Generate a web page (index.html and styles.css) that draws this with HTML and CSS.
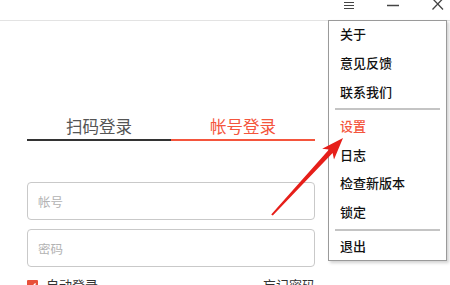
FILE: index.html
```html
<!DOCTYPE html>
<html lang="zh">
<head>
<meta charset="utf-8">
<link rel="stylesheet" href="styles.css">
</head>
<body>
<div class="window">
  <div class="titlebar">
    <svg class="ico ico-menu" width="12" height="12" viewBox="0 0 12 12"><path d="M1 2.5H11M1 5.5H11M1 8.5H11" stroke="#444" stroke-width="1.2"/></svg>
    <svg class="ico ico-min" width="14" height="12" viewBox="0 0 14 12"><path d="M1 5.5H13" stroke="#444" stroke-width="1.5"/></svg>
    <svg class="ico ico-close" width="13" height="12" viewBox="0 0 13 12"><path d="M1.5 -1.5L12 9.5M12 -1.5L1.5 9.5" stroke="#444" stroke-width="1.3"/></svg>
  </div>
  <div class="form">
    <div class="tabs">
      <div class="tab tab-dark">扫码登录</div>
      <div class="tab tab-active">帐号登录</div>
    </div>
    <div class="field"><span class="ph">帐号</span></div>
    <div class="field field-2"><span class="ph">密码</span></div>
    <div class="opts">
      <label class="auto"><span class="check"><svg width="11" height="11" viewBox="0 0 11 11"><path d="M2.5 5.5L4.6 7.6L8.6 3.4" stroke="#fff" stroke-width="1.4" fill="none"/></svg></span>自动登录</label>
      <span class="forgot">忘记密码</span>
    </div>
  </div>
  <div class="menu">
    <div class="item">关于</div>
    <div class="item">意见反馈</div>
    <div class="item">联系我们</div>
    <div class="sep"></div>
    <div class="item item-red">设置</div>
    <div class="item">日志</div>
    <div class="item">检查新版本</div>
    <div class="item">锁定</div>
    <div class="sep"></div>
    <div class="item">退出</div>
  </div>
  <svg class="arrow" width="450" height="285" viewBox="0 0 450 285"><polygon points="271.2,214.4 329,149.5 322.2,148.8 343,138 334,159.6 332.6,152.9 272.8,215.6" fill="#e61f1a"/></svg>
</div>
</body>
</html>
```
FILE: styles.css
```css
* { box-sizing: border-box; }
html, body { margin: 0; padding: 0; background: #fff; }
body {
  width: 450px;
  height: 285px;
  overflow: hidden;
  font-family: "Noto Sans CJK SC", "Noto Sans", sans-serif;
}
.window { position: relative; width: 450px; height: 285px; }
.titlebar {
  height: 21px;
  border-bottom: 1px solid #e3e3e3;
  display: flex;
  justify-content: flex-end;
  align-items: flex-start;
  gap: 31px;
  padding-right: 6px;
}
.ico { display: block; }
.form {
  width: 288px;
  margin-left: 27px;
}
.tabs {
  margin-top: 92px;
  display: flex;
}
.tab {
  flex: 1;
  height: 28px;
  line-height: 26px;
  text-align: center;
  font-size: 16.5px;
  color: #555;
  border-bottom: 2px solid #333;
}
.tab-active {
  color: #f4553d;
  border-bottom-color: #f4553d;
}
.field {
  margin-top: 41px;
  height: 38px;
  border: 1px solid #c9c9c9;
  border-radius: 4px;
  padding-left: 10px;
  display: flex;
  align-items: center;
}
.field-2 { margin-top: 9px; }
.ph { font-size: 12.5px; color: #b3b3b3; }
.opts {
  margin-top: 9px;
  display: flex;
  justify-content: space-between;
  align-items: center;
  font-size: 13px;
  color: #333;
  line-height: 18px;
}
.auto { display: flex; align-items: center; gap: 8px; }
.check {
  width: 11px;
  height: 11px;
  background: #e8503a;
  border-radius: 1px;
  display: block;
}
.check svg { display: block; }
.menu {
  position: absolute;
  left: 328px;
  top: 20px;
  width: 119px;
  height: 241px;
  background: #fff;
  border: 1px solid #9a9a9a;
  box-shadow: 2px 2px 3px rgba(0,0,0,0.18);
}
.item {
  height: 28.75px;
  line-height: 25px;
  padding-left: 11px;
  font-size: 13px;
  color: #111;
  font-weight: 500;
}
.item-red { color: #f4553d; }
.sep {
  height: 2px;
  background: #c4c4c4;
  margin: 1px 6px 2.5px;
}
.arrow { position: absolute; left: 0; top: 0; pointer-events: none; }
```
